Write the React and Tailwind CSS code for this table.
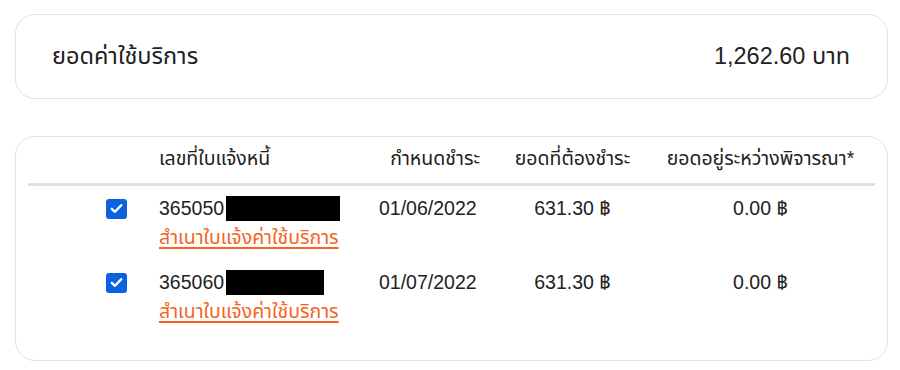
import React from "react";

const font = { fontFamily: '"Liberation Sans", "Noto Sans Thai", "Noto Sans", sans-serif' };

function Check() {
  return (
    <div className="w-[21px] h-[20px] rounded-[3px] bg-[#0a62e0] flex items-center justify-center">
      <svg width="13" height="11" viewBox="0 0 13 11" fill="none">
        <path d="M1.8 5.8 L5 8.8 L11.2 2.2" stroke="white" strokeWidth="2.4" strokeLinecap="round" strokeLinejoin="round" />
      </svg>
    </div>
  );
}

function Row({ num, date, amt, pending, rectClass }) {
  return (
    <div className="flex py-[8px] text-[19.5px] leading-[29px] text-[#222]">
      <div className="w-[131px] h-[29px] flex items-center justify-end pr-[32px]">
        <Check />
      </div>
      <div className="w-[211px]">
        <div className="flex items-center h-[29px]">
          <span>{num}</span>
          <span className={"inline-block bg-black h-[25px] ml-[2px] " + rectClass} />
        </div>
        <a className="text-[#f5641e] underline underline-offset-[3px] decoration-[1.5px] whitespace-nowrap">สำเนาใบแจ้งค่าใช้บริการ</a>
      </div>
      <div className="w-[120px] pl-[9px]">{date}</div>
      <div className="w-[165px] text-center">{amt}</div>
      <div className="w-[211px] text-center">{pending}</div>
    </div>
  );
}

export default function App() {
  return (
    <div className="w-[900px] h-[370px] bg-white pt-[14px] px-[15px]" style={font}>
      <div className="w-[873px] h-[85px] border border-[#e2e2e2] rounded-[20px] flex items-center justify-between pl-[36px] pr-[37px] text-[#222] text-[23.5px]">
        <span>ยอดค่าใช้บริการ</span>
        <span>1,262.60 บาท</span>
      </div>
      <div className="mt-[37px] w-[873px] h-[225px] border border-[#e2e2e2] rounded-[20px] px-[12px]">
        <div className="flex pt-[7px] pb-[10px] text-[19.5px] leading-[29px] text-[#222] border-b-[3px] border-[#dedfe2]">
          <div className="w-[131px]" />
          <div className="w-[211px]">เลขที่ใบแจ้งหนี้</div>
          <div className="w-[120px] text-right pr-[10px]">กำหนดชำระ</div>
          <div className="w-[165px] text-center">ยอดที่ต้องชำระ</div>
          <div className="w-[211px] text-center">ยอดอยู่ระหว่างพิจารณา*</div>
        </div>
        <Row num="365050" date="01/06/2022" amt="631.30 ฿" pending="0.00 ฿" rectClass="w-[114px]" />
        <Row num="365060" date="01/07/2022" amt="631.30 ฿" pending="0.00 ฿" rectClass="w-[98px]" />
      </div>
    </div>
  );
}
